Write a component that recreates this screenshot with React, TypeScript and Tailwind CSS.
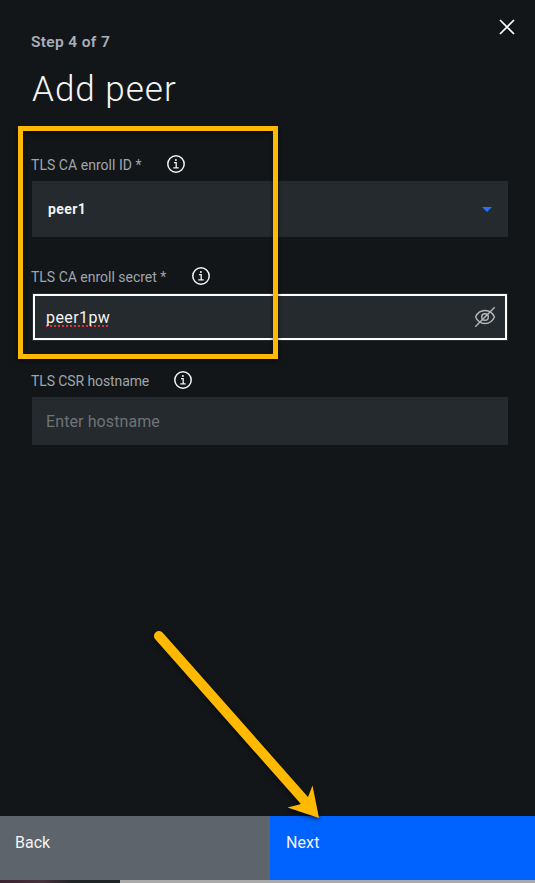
import type { ReactNode } from "react";

function InfoIcon() {
  return (
    <svg className="h-[20px] w-[20px] shrink-0" viewBox="0 0 20 20" fill="none" stroke="#f3f3f3">
      <circle cx="10" cy="10" r="8.2" strokeWidth="1.5" />
      <path d="M8 8.6h2.2v5M7.3 13.9h5.4" strokeWidth="1.3" />
      <circle cx="9.9" cy="5.9" r="1" fill="#f3f3f3" stroke="none" />
    </svg>
  );
}

function Label({ children, width, tracking }: { children: ReactNode; width: string; tracking: string }) {
  return (
    <div className="flex h-[20px] items-center text-[14px] text-[#a0a5ac]">
      <span className={`${width} ${tracking} -ml-px whitespace-nowrap pt-[3px] leading-[17px]`}>{children}</span>
      <InfoIcon />
    </div>
  );
}

export default function App() {
  return (
    <div className="relative flex h-[883px] w-[535px] flex-col overflow-hidden bg-[#121619] font-['Roboto',sans-serif]">
      <header className="flex h-[154px] shrink-0 justify-between pl-[31px] pr-[20px]">
        <div>
          <p className="mt-[32px] text-[15.5px] font-semibold leading-[20px] tracking-[0.35px] text-[#a9afb9]">Step 4 of 7</p>
          <h1 className="ml-px mt-[16px] text-[35px] font-light leading-[44px] tracking-[1px] text-[#f5f5f5]">Add peer</h1>
        </div>
        <svg className="mt-[19px] h-[16px] w-[16px]" viewBox="0 0 16 16" stroke="#fff" strokeWidth="1.7">
          <path d="M1 1l14 14M15 1L1 15" />
        </svg>
      </header>
      <main className="grow pl-[32px] pr-[27px]">
        <Label width="w-[135px]" tracking="tracking-[0.04px]">TLS CA enroll ID *</Label>
        <div className="mt-[7px] flex h-[56px] items-center justify-between bg-[#242a2e] px-[16px]">
          <span className="text-[14px] font-bold tracking-[0.4px] text-[#f3f3f3]">peer1</span>
          <svg className="h-[5px] w-[10px]" viewBox="0 0 10 5" fill="#2171ff"><path d="M0 0h10L5 5z" /></svg>
        </div>
        <div className="h-[29px]" />
        <Label width="w-[160px]" tracking="tracking-[-0.01px]">TLS CA enroll secret *</Label>
        <div className="mt-[7px] h-[48px] bg-[#242a2e] p-px">
          <div className="flex h-[46px] items-center justify-between border-2 border-white pl-[11px] pr-[9px]">
            <span className="pt-[2px] text-[16px] leading-[20px] tracking-[0.42px] text-[#f3f3f3] underline decoration-[#e0343a] decoration-dotted decoration-2 underline-offset-[2px] [text-decoration-skip-ink:none]">peer1pw</span>
            <svg className="h-[22px] w-[22px]" viewBox="0 0 22 22" fill="none" stroke="#b5b9be" strokeWidth="1.4">
              <path d="M1.6 11C3.4 6.7 7 4.5 11 4.5s7.6 2.2 9.4 6.5c-1.8 4.3-5.4 6.5-9.4 6.5S3.4 15.3 1.6 11z" />
              <circle cx="11" cy="11" r="3.3" />
              <path d="M1.3 20.7L20.7 1.3" />
            </svg>
          </div>
        </div>
        <div className="h-[29px]" />
        <Label width="w-[142px]" tracking="tracking-[-0.1px]">TLS CSR hostname</Label>
        <div className="mt-[7px] flex h-[48px] items-center bg-[#242a2e] pl-[14px] pt-[2px] text-[16px] tracking-[0.1px] text-[#6f7374]">Enter hostname</div>
      </main>
      <footer className="flex h-[64px] shrink-0 text-[16px] leading-[20px] text-[#f3f3f3]">
        <button className="flex w-[270px] items-start bg-[#5d646b] pl-[15px] pt-[17px]">Back</button>
        <button className="flex grow items-start bg-[#0062ff] pl-[16px] pt-[17px] tracking-[0.1px]">Next</button>
      </footer>
      <div className="flex h-[3px] shrink-0 bg-[#aaa]">
        <div className="w-[120px] bg-gradient-to-r from-[#3a2430] via-[#45303c] via-35% to-[#202325] to-60%" />
      </div>
      <div className="absolute left-[18px] top-[126px] h-[233px] w-[260px] border-[5px] border-[#ffb900] drop-shadow-[0_2px_2px_rgba(0,0,0,0.6)]" />
      <svg className="absolute left-[145px] top-[622px] h-[205px] w-[185px] drop-shadow-[0_2px_2px_rgba(0,0,0,0.6)]" viewBox="145 622 185 205">
        <path d="M159 636L304 800" stroke="#ffb900" strokeWidth="10" strokeLinecap="round" />
        <path d="M319 818L312.5 785.5L308 797L299.5 804.5L287.5 807.5z" fill="#ffb900" />
      </svg>
    </div>
  );
}
